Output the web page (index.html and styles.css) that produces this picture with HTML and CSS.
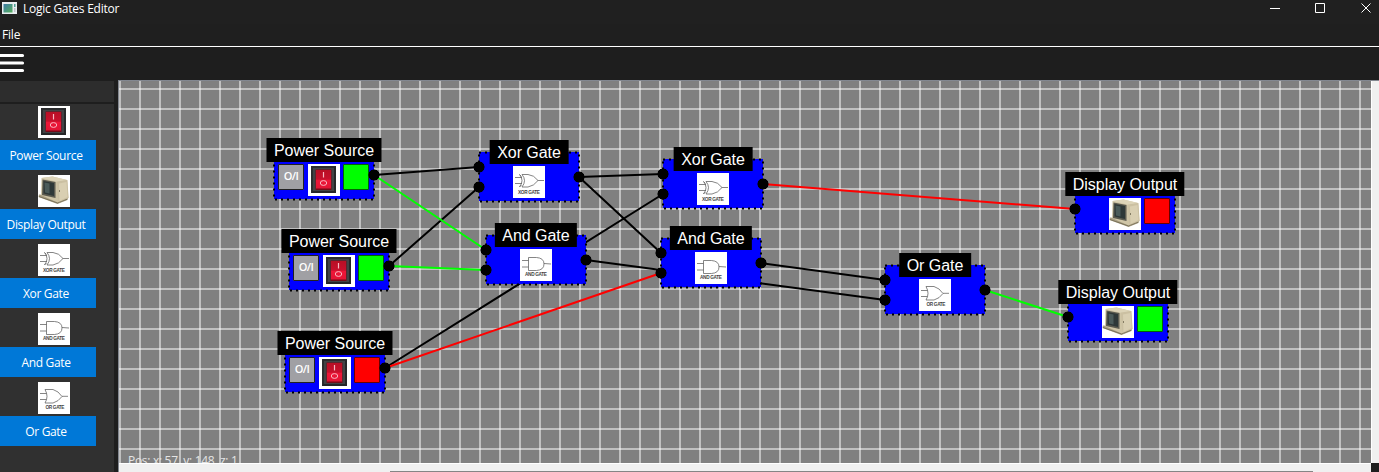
FILE: index.html
```
<!DOCTYPE html>
<html lang="en">
<head>
<meta charset="utf-8">
<title>Logic Gates Editor</title>
<link rel="stylesheet" href="styles.css">
</head>
<body>
<svg class="defs" aria-hidden="true">
  <defs>
    <linearGradient id="red" x1="0" y1="0" x2="0" y2="1"><stop offset="0" stop-color="#b80f25"/><stop offset=".5" stop-color="#c8102c"/><stop offset=".55" stop-color="#ee1638"/><stop offset="1" stop-color="#e21435"/></linearGradient>
    <linearGradient id="app" x1="0" y1="0" x2="1" y2="1"><stop offset="0" stop-color="#3d7ca8"/><stop offset="1" stop-color="#58b05c"/></linearGradient>
    <symbol id="switch" viewBox="0 0 32 32">
      <path fill="#fff" d="M0 0h32v32H0z"/>
      <path fill="#2b2c2e" d="M3 2h25v27H3z"/>
      <path fill="#414345" d="M5 4h21v23H5z"/>
      <path fill="#252628" d="M26 4l2-2v27H3l2-2h21z"/>
      <path fill="#740b18" d="M7.500 5.500h16v20.500h-16z"/>
      <path fill="url(#red)" d="M8 6h15v18.500H8z"/>
      <path stroke="#f8b8c2" stroke-width="1.200" d="M15.500 8v5.500"/>
      <ellipse cx="15.500" cy="19" rx="3.200" ry="2.400" fill="none" stroke="#f8b8c2"/>
    </symbol>
    <symbol id="monitor" viewBox="0 0 32 32">
      <path fill="#fff" d="M0 0h32v32H0z"/>
      <path fill="#a99f84" d="M1 19.500l-.5 2.500 19 7 10-4v-3z"/>
      <path fill="#cfc5a6" d="M3.500 3l11-1.500L29 5l1.500 18-10 5L3 20z"/>
      <path fill="#ddd4b8" d="M3.500 3l11-1.500L29 5l-9 2z"/>
      <path fill="#cbc0a2" d="M19 6.500L29.500 5l1 18-10 5z"/>
      <path fill="#d9cfb2" d="M21 8.500l7.500-1.500 1 15-8 4z"/>
      <path fill="#5c5b50" d="M4.500 4.500l13 2.500v16L4 20z"/>
      <path fill="#2e3838" d="M5.500 6l10.500 2v13l-10.500-2.500z"/>
      <path fill="#4b5b5a" d="M6.500 7.500l5 1v10l-4.500-1z"/>
      <path fill="none" stroke="#6f674f" stroke-width=".8" d="M1 21.500l18.500 6.500 10-4M21.500 15v2"/>
    </symbol>
    <symbol id="xor" viewBox="0 0 32 32">
      <path fill="#fff" d="M0 0h32v32H0z"/>
      <path class="wire-art" d="M2 11.500h7M2 17.500h7M25 14.500h6M6.500 8.500q5 6 0 12.500M9 8.500q5 6 0 12.500M9 8.500h6q6 .5 10 6-4 5.500-10 6.500H9M6.500 8.500l2 2M6.500 21l2-2"/>
      <text class="caption" x="16" y="27.500" textLength="22">XOR GATE</text>
    </symbol>
    <symbol id="and" viewBox="0 0 32 32">
      <path fill="#fff" d="M0 0h32v32H0z"/>
      <path class="wire-art" d="M2 11.500h6.500M2 18h6.500M24 14.500l7 .5M8.500 8.500h8q7.500.5 7.500 6.500t-7.500 6.500h-8z"/>
      <text class="caption" x="16" y="27" textLength="22">AND GATE</text>
    </symbol>
    <symbol id="or" viewBox="0 0 32 32">
      <path fill="#fff" d="M0 0h32v32H0z"/>
      <path class="wire-art" d="M2 11.500h6.500M2 17.500h6.500M24 14.300h6M7 7.500h8q5.500 1.500 9 7-3.500 5-9 6.500H7q4-6.500 0-13.500z"/>
      <text class="caption" x="17" y="26.500" textLength="19">OR GATE</text>
    </symbol>
    <symbol id="frame" viewBox="0 0 104 54"><rect class="outline" x="2" y="2.500" width="100" height="49"/></symbol>
  </defs>
</svg>
<div class="window">
  <header class="titlebar">
    <svg class="app-icon" width="15" height="12" viewBox="0 0 15 12"><path fill="#e9edf0" d="M0 0h15v12H0z"/><path fill="url(#app)" d="M1.500 2h9v8.500h-9z"/><path fill="#4f9f94" d="M12 2h1.500v3H12z"/><path fill="#bbc2c8" d="M12 6h1.500v4H12z"/></svg>
    <span class="title">Logic Gates Editor</span>
    <svg class="controls" width="110" height="17" viewBox="0 0 110 17"><path d="M1 8.500h10M46.500 3.500h9v9h-9zM92.500 3.500l9 9M101.500 3.500l-9 9"/></svg>
  </header>
  <nav class="menubar"><span class="menu">File</span></nav>
  <div class="toolbar"><svg width="25" height="33" viewBox="0 0 25 33"><path stroke="#fff" stroke-width="3.200" stroke-linecap="round" d="M0 8.500h22.500M0 16h22.500M0 23.500h22.500"/></svg></div>
  <main class="workspace">
    <aside class="sidebar">
      <div class="panel-head"></div>
      <div class="palette">
        <div class="item"><svg class="pic"><use href="#switch"/></svg><button>Power Source</button></div>
        <div class="item"><svg class="pic"><use href="#monitor"/></svg><button>Display Output</button></div>
        <div class="item"><svg class="pic"><use href="#xor"/></svg><button>Xor Gate</button></div>
        <div class="item"><svg class="pic"><use href="#and"/></svg><button>And Gate</button></div>
        <div class="item"><svg class="pic"><use href="#or"/></svg><button>Or Gate</button></div>
      </div>
    </aside>
    <section class="view">
      <div class="canvas">
        <svg class="wires" viewBox="119 81 1252 382">
          <path d="M374 175L479 167M389 266L479 187M385 368L663 194M579 177L663 174M579 177L661 253M586 260L885 300M761 263L885 280"/>
          <path class="on" d="M374 175L486 250M389 266L486 270M985 290L1068 317"/>
          <path class="off" d="M385 368L661 273M763 184L1075 209"/>
        </svg>
        <div class="node p1"><svg class="frame"><use href="#frame"/></svg><span class="toggle">O/I</span><svg class="pic"><use href="#switch"/></svg><i class="lamp green"></i><i class="port out"></i><b class="label">Power Source</b></div>
        <div class="node p2"><svg class="frame"><use href="#frame"/></svg><span class="toggle">O/I</span><svg class="pic"><use href="#switch"/></svg><i class="lamp green"></i><i class="port out"></i><b class="label">Power Source</b></div>
        <div class="node p3"><svg class="frame"><use href="#frame"/></svg><span class="toggle">O/I</span><svg class="pic"><use href="#switch"/></svg><i class="lamp"></i><i class="port out"></i><b class="label">Power Source</b></div>
        <div class="node x1"><svg class="frame"><use href="#frame"/></svg><svg class="pic"><use href="#xor"/></svg><i class="port in-a"></i><i class="port in-b"></i><i class="port out"></i><b class="label">Xor Gate</b></div>
        <div class="node a1"><svg class="frame"><use href="#frame"/></svg><svg class="pic"><use href="#and"/></svg><i class="port in-a"></i><i class="port in-b"></i><i class="port out"></i><b class="label">And Gate</b></div>
        <div class="node x2"><svg class="frame"><use href="#frame"/></svg><svg class="pic"><use href="#xor"/></svg><i class="port in-a"></i><i class="port in-b"></i><i class="port out"></i><b class="label">Xor Gate</b></div>
        <div class="node a2"><svg class="frame"><use href="#frame"/></svg><svg class="pic"><use href="#and"/></svg><i class="port in-a"></i><i class="port in-b"></i><i class="port out"></i><b class="label">And Gate</b></div>
        <div class="node o1"><svg class="frame"><use href="#frame"/></svg><svg class="pic"><use href="#or"/></svg><i class="port in-a"></i><i class="port in-b"></i><i class="port out"></i><b class="label">Or Gate</b></div>
        <div class="node d1"><svg class="frame"><use href="#frame"/></svg><svg class="pic"><use href="#monitor"/></svg><i class="lamp"></i><i class="port in"></i><b class="label">Display Output</b></div>
        <div class="node d2"><svg class="frame"><use href="#frame"/></svg><svg class="pic"><use href="#monitor"/></svg><i class="lamp green"></i><i class="port in"></i><b class="label">Display Output</b></div>
        <span class="position">Pos: x: 57&nbsp; y: 148&nbsp; z: 1</span>
      </div>
      <div class="scroll-y"></div>
      <div class="scroll-x"><div class="thumb"></div></div>
      <div class="corner"></div>
    </section>
  </main>
</div>
</body>
</html>
```
FILE: styles.css
```
* { box-sizing: border-box; }
body { margin: 0; background: #1e1e1e; font-family: "Open Sans", "Noto Sans", sans-serif; font-size: 12px; color: #fff; }
.defs { position: absolute; width: 0; height: 0; }
.window { width: 1379px; height: 472px; overflow: hidden; display: flex; flex-direction: column; }
.titlebar { height: 24px; background: #202020; display: flex; align-items: flex-start; padding: 0 5px 0 2px; }
.app-icon { margin-top: 2px; }
.title { margin-left: 6px; line-height: 18px; font-size: 12px; letter-spacing: -.25px; }
.controls { margin-left: auto; margin-right: -5px; }
.controls path { fill: none; stroke: #fff; stroke-width: 1; }
.menubar { height: 23px; background: #1f1f1f; border-bottom: 1px solid #fff; padding-left: 2px; line-height: 22px; font-size: 12px; letter-spacing: -.2px; }
.toolbar { height: 33px; }
.toolbar svg { display: block; }
.workspace { flex: 1; display: flex; min-height: 0; }
.sidebar { width: 118px; display: flex; flex-direction: column; gap: 2px; padding-right: 4px; padding-top: 1px; }
.panel-head { height: 21px; background: #2d2d2d; }
.palette { flex: 1; background: #303030; padding-top: 2px; display: flex; flex-direction: column; gap: 5px; }
.item { display: flex; flex-direction: column; gap: 2px; height: 64px; }
.pic { width: 32px; height: 32px; display: block; flex: none; }
.item .pic { margin-left: 38px; }
.item button { width: 96px; height: 30px; border: 0; padding: 1px 4px 0 0; background: #0078d7; color: #fff; font-family: inherit; font-size: 12px; letter-spacing: -.33px; white-space: nowrap; }
.wire-art { fill: none; stroke: #5c5c5c; stroke-width: .75; }
.caption { font: bold 4.700px "Liberation Sans", Arial, sans-serif; text-anchor: middle; fill: #444; }
.view { flex: 1; display: grid; grid-template-columns: 1252px 8px; grid-template-rows: 382px 9px; border-left: 1px solid #828790; border-top: 1px solid #828790; }
.canvas { position: relative; overflow: hidden; background-color: #808080;
  background-image: linear-gradient(90deg, rgba(255,255,255,.5) 2px, transparent 2px), linear-gradient(rgba(255,255,255,.5) 2px, transparent 2px);
  background-size: 20px 20px; background-position: 0 7px; }
.scroll-y { background: #f0f0f0; border-left: 1px solid #fff; }
.scroll-x { background: #f0f0f0; border-top: 1px solid #fff; padding: 7px 58px 0 271px; }
.thumb { height: 1px; background: #858585; }
.corner { background: #1e1e1e; }
.wires { display: block; width: 1252px; height: 382px; }
.wires path { fill: none; stroke: #000; stroke-width: 2; }
.wires .on { stroke: #0f0; }
.wires .off { stroke: #f00; }
/* Nodes are freely placed on the editing surface. */
.node { position: absolute; width: 100px; height: 49px; background: #00f; }
.node > * { position: absolute; }
.frame { left: -2px; top: -2px; width: 104px; height: 54px; }
.outline { fill: none; stroke: #000; stroke-width: 2; stroke-dasharray: 2 4; }
.node .pic { left: 34px; top: 14px; }
.label { left: 50px; top: -12px; height: 24px; transform: translateX(-50%); padding: 0 7.500px; background: #000; font: 16px/26px "Liberation Sans", Arial, sans-serif; letter-spacing: -.04px; white-space: nowrap; }
.toggle { left: 4px; top: 14px; width: 26px; height: 26px; background: #a0a0a4; border: 1px solid #222; border-radius: 1px; font-size: 11px; font-weight: 600; letter-spacing: -.6px; line-height: 22px; text-align: center; }
.lamp { left: 69px; top: 14px; width: 26px; height: 26px; background: #f00; border: 1px solid #600; border-radius: 1px; }
.lamp.green { background: #0f0; border-color: #060; }
.port { width: 12px; height: 12px; border-radius: 50%; background: radial-gradient(circle, #000 5.200px, transparent 5.900px); }
.in, .in-a, .in-b { left: -6px; }
.in, .out { top: 19px; }
.out { left: 94px; }
.in-a { top: 9px; }
.in-b { top: 29px; }
.p1 { left: 155px; top: 69px; }
.p2 { left: 170px; top: 160px; }
.p3 { left: 166px; top: 262px; }
.x1 { left: 360px; top: 71px; }
.a1 { left: 367px; top: 154px; }
.x2 { left: 544px; top: 78px; }
.a2 { left: 542px; top: 157px; }
.o1 { left: 766px; top: 184px; }
.d1 { left: 956px; top: 103px; }
.d2 { left: 949px; top: 211px; }
.position { position: absolute; left: 9px; top: 371px; font-size: 12px; letter-spacing: -.3px; line-height: 17px; color: #e4e4e4; white-space: nowrap; }
```
